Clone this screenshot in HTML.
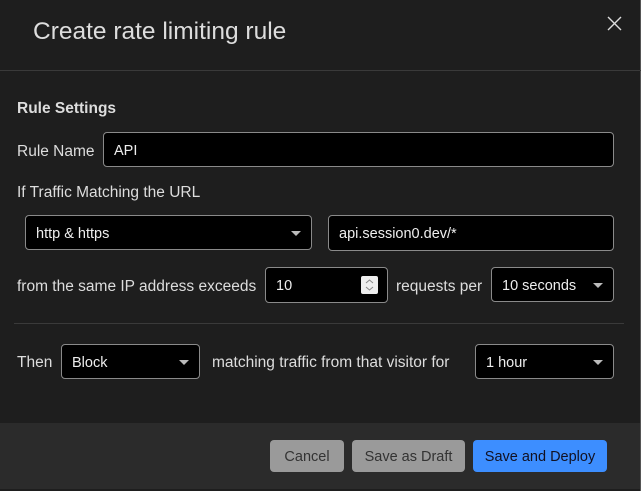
<!DOCTYPE html>
<html><head><style>
*{box-sizing:border-box;margin:0;padding:0}
body{width:641px;height:491px;background:#1e1e1e;font-family:"Liberation Sans",sans-serif;color:#ddd;position:relative;overflow:hidden;font-size:15.5px}
.a{position:absolute}
.box{position:absolute;background:#000;border:1px solid #8a8a8a;border-radius:4px;color:#eee;font-size:14.5px;padding-left:10px;padding-top:2px;display:flex;align-items:center}
.caret{position:absolute;right:10px;top:50%;margin-top:-2px;width:0;height:0;border-left:5px solid transparent;border-right:5px solid transparent;border-top:5px solid #bbb}
.lbl{position:absolute;font-size:15.5px;color:#ddd;line-height:20px;margin-top:2px}
.btn{position:absolute;border-radius:4px;font-size:14.5px;padding-top:2px;display:flex;align-items:center;justify-content:center}
</style></head><body>
<div class="a" style="right:0;top:0;width:1px;height:491px;background:#555"></div>
<div class="a" style="left:33px;top:18px;font-size:24.5px;color:#ddd">Create rate limiting rule</div>
<svg class="a" style="left:607px;top:16px" width="15" height="15"><path d="M1 1L14 14M14 1L1 14" stroke="#ddd" stroke-width="1.4"/></svg>
<div class="a" style="left:0;top:70px;width:641px;height:1px;background:#3a3a3a"></div>
<div class="lbl" style="left:17px;top:97px;font-weight:bold">Rule Settings</div>
<div class="lbl" style="left:17px;top:140px">Rule Name</div>
<div class="box" style="left:103px;top:132px;width:511px;height:35px">API</div>
<div class="lbl" style="left:17px;top:181px">If Traffic Matching the URL</div>
<div class="box" style="left:25px;top:215px;width:287px;height:35px">http &amp; https<span class="caret"></span></div>
<div class="box" style="left:328px;top:215px;width:286px;height:36px">api.session0.dev/*</div>
<div class="lbl" style="left:17px;top:275px">from the same IP address exceeds</div>
<div class="box" style="left:265px;top:267px;width:123px;height:36px">10<div class="a" style="left:95px;top:8px;width:17px;height:18px;background:#eee;border-radius:2px"><svg width="17" height="18"><path d="M5 7L8.5 4L12 7M5 11L8.5 14L12 11" stroke="#888" fill="none"/></svg></div></div>
<div class="lbl" style="left:396px;top:275px">requests per</div>
<div class="box" style="left:491px;top:267px;width:123px;height:35px">10 seconds<span class="caret"></span></div>
<div class="a" style="left:14px;top:323px;width:610px;height:1px;background:#3a3a3a"></div>
<div class="lbl" style="left:17px;top:351px">Then</div>
<div class="box" style="left:61px;top:344px;width:139px;height:35px">Block<span class="caret"></span></div>
<div class="lbl" style="left:212px;top:351px">matching traffic from that visitor for</div>
<div class="box" style="left:475px;top:344px;width:139px;height:35px">1 hour<span class="caret"></span></div>
<div class="a" style="left:0;top:423px;width:640px;height:66px;background:#2b2b2b"></div>
<div class="btn" style="left:270px;top:440px;width:74px;height:32px;background:#9a9a9a;color:#333">Cancel</div>
<div class="btn" style="left:352px;top:440px;width:113px;height:32px;background:#9a9a9a;color:#333">Save as Draft</div>
<div class="btn" style="left:473px;top:440px;width:134px;height:32px;background:#3d8eff;color:#112">Save and Deploy</div>
</body></html>
